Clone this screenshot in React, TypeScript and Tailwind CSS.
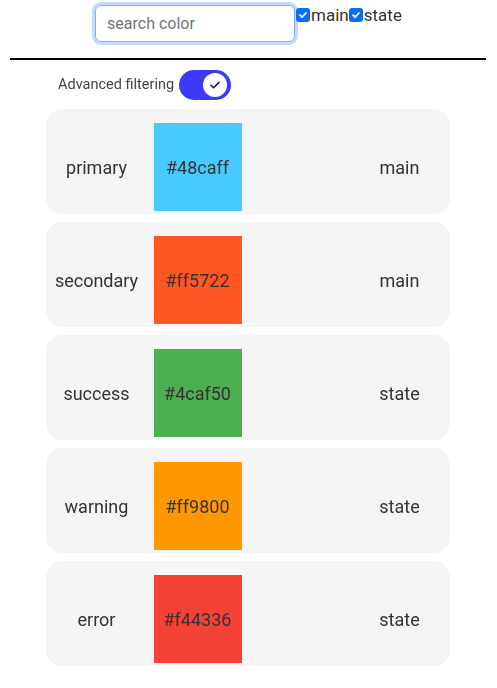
import React, { useState } from 'react';

type ColorRow = { name: string; hex: string; type: 'main' | 'state' };

const colors: ColorRow[] = [
  { name: 'primary', hex: '#48caff', type: 'main' },
  { name: 'secondary', hex: '#ff5722', type: 'main' },
  { name: 'success', hex: '#4caf50', type: 'state' },
  { name: 'warning', hex: '#ff9800', type: 'state' },
  { name: 'error', hex: '#f44336', type: 'state' },
];

const CheckBox: React.FC<{ label: string }> = ({ label }) => (
  <label className="flex items-center text-[17px] leading-[20px] text-[#333]">
    <span className="w-[14px] h-[14px] rounded-[3px] bg-[#0b6ef5] flex items-center justify-center">
      <svg width="10" height="10" viewBox="0 0 10 10" fill="none">
        <path d="M2 5.2l2 2 4-4.2" stroke="white" strokeWidth="1.8" strokeLinecap="round" strokeLinejoin="round" />
      </svg>
    </span>
    <span className="ml-[1px]">{label}</span>
  </label>
);

const App: React.FC = () => {
  const [query, setQuery] = useState('');

  return (
    <div className="font-['Roboto','Liberation_Sans',sans-serif] bg-white min-h-[688px] pb-4">
      <div className="flex justify-center items-start pt-[5px]">
        <input
          autoFocus
          value={query}
          onChange={e => setQuery(e.target.value)}
          placeholder="search color"
          className="w-[200px] h-[37px] rounded-[6px] border border-[#7fb0f5] ring-[3px] ring-[#c3dafe] pl-[11px] text-[16px] text-[#333] placeholder:text-[#757575] outline-none"
        />
        <div className="flex items-center ml-[1px]">
          <CheckBox label="main" />
          <CheckBox label="state" />
        </div>
      </div>

      <div className="h-[2px] bg-black ml-[10px] mr-[11px] mt-[16px]" />

      <div className="flex items-center mt-[10px] pl-[58px]">
        <span className="text-[14.5px] text-[#444]">Advanced filtering</span>
        <div className="ml-[5px] w-[52px] h-[30px] rounded-full bg-[#3b3bf7] flex items-center justify-end pr-[4px]">
          <div className="w-[24px] h-[24px] rounded-full bg-white flex items-center justify-center">
            <svg width="14" height="14" viewBox="0 0 14 14" fill="none">
              <path d="M3 7.2l2.6 2.6L11 4.4" stroke="#1b1b5c" strokeWidth="1.6" strokeLinecap="round" strokeLinejoin="round" />
            </svg>
          </div>
        </div>
      </div>

      <div className="w-[404px] ml-[46px] mt-[9px] flex flex-col gap-2">
        {colors.map(c => (
          <div key={c.name} className="h-[105px] rounded-[16px] bg-[#f5f5f5] grid grid-cols-4 items-center pt-[14px] pb-[3px] text-[18px] text-[#333]">
            <span className="text-center">{c.name}</span>
            <div className="flex justify-center">
              <div className="w-[88px] h-[88px] flex items-center justify-center" style={{ backgroundColor: c.hex }}>
                {c.hex}
              </div>
            </div>
            <span />
            <span className="text-center">{c.type}</span>
          </div>
        ))}
      </div>
    </div>
  );
};

export default App;
